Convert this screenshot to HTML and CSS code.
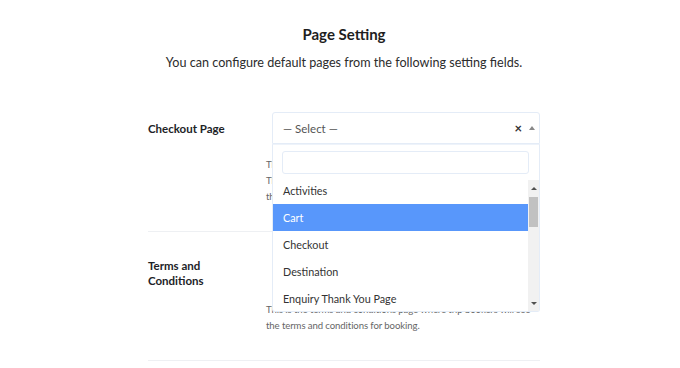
FILE: index.html
```html
<!DOCTYPE html>
<html lang="en">
<head>
<meta charset="utf-8">
<title>Page Setting</title>
<link rel="stylesheet" href="styles.css">
</head>
<body>
<div class="page">
  <h1 class="title">Page Setting</h1>
  <p class="subtitle">You can configure default pages from the following setting fields.</p>
  <div class="settings">
    <div class="row">
      <div class="label">Checkout Page</div>
      <div class="field">
        <div class="select open">
          <span class="placeholder">— Select —</span>
          <span class="controls"><span class="clear">×</span><span class="caret"></span></span>
          <div class="dropdown">
            <div class="search"><input type="text" class="search-input"></div>
            <div class="results">
              <ul class="options">
                <li>Activities</li>
                <li class="active">Cart</li>
                <li>Checkout</li>
                <li>Destination</li>
                <li>Enquiry Thank You Page</li>
                <li>Home</li>
                <li>My Account</li>
                <li>Privacy Policy</li>
                <li>Terms and Conditions</li>
                <li>Thank You</li>
                <li>Trip Search Results</li>
                <li>Trip Types</li>
                <li>Trips</li>
                <li>Wishlist</li>
              </ul>
              <div class="scrollbar">
                <span class="sb-btn up"></span>
                <span class="sb-track"><span class="sb-thumb"></span></span>
                <span class="sb-btn down"></span>
              </div>
            </div>
          </div>
        </div>
        <p class="desc">This is the checkout page where trip bookers will book their trips.<br>The checkout shortcode must be placed on this page to show<br>the checkout form.</p>
      </div>
    </div>
    <div class="row">
      <div class="label">Terms and<br>Conditions</div>
      <div class="field">
        <div class="select">
          <span class="placeholder">— Select —</span>
          <span class="controls"><span class="caret down"></span></span>
        </div>
        <p class="desc">This is the terms and conditions page where trip bookers will see the terms and conditions for booking.</p>
      </div>
    </div>
  </div>
</div>
</body>
</html>
```
FILE: styles.css
```css
* { box-sizing: border-box; }
html, body { margin: 0; padding: 0; background: #fff; }
body {
  font-family: Lato, "Open Sans", sans-serif;
  color: #1e1e1e;
}
.page {
  padding: 23px 0 0 8px;
}
.title {
  margin: 0;
  text-align: center;
  font-size: 15px;
  font-weight: 700;
  line-height: 22px;
  color: #1e1e1e;
}
.subtitle {
  margin: 7px 0 0;
  text-align: center;
  font-size: 12.6px;
  line-height: 22px;
  color: #2c2c2c;
}
.settings {
  width: 392px;
  margin: 13px auto 0;
}
.row {
  display: flex;
  padding: 25px 0 26px;
  border-bottom: 1px solid #eef0f3;
}
.label {
  width: 118px;
  flex: none;
  font-size: 11.5px;
  font-weight: 700;
  line-height: 15px;
  color: #1d2327;
  height: 32px;
  display: flex;
  align-items: center;
}
.field {
  flex: 1;
  min-width: 0;
}
.select {
  position: relative;
  margin-left: 6px;
  height: 32px;
  border: 1px solid #e4ecf7;
  border-radius: 3px;
  display: flex;
  align-items: center;
  padding: 0 4px 0 10px;
  font-size: 11.5px;
  color: #555;
  background: #fff;
}
.select.open {
  border-radius: 3px 3px 0 0;
  z-index: 2;
}
.placeholder { flex: 1; }
.controls {
  display: flex;
  align-items: center;
  gap: 7px;
}
.clear {
  font-size: 13px;
  font-weight: 700;
  color: #333;
  line-height: 1;
}
.caret {
  width: 0;
  height: 0;
  border-left: 3px solid transparent;
  border-right: 3px solid transparent;
  border-bottom: 4px solid #888;
}
.caret.down {
  border-bottom: 0;
  border-top: 4px solid #888;
}
.dropdown {
  position: absolute;
  left: -1px;
  right: -1px;
  top: 31px;
  background: #fff;
  border: 1px solid #e4ecf7;
  border-top: 1px solid #eef3fa;
  border-radius: 0 0 3px 3px;
}
.search {
  padding: 6px 10px 6px 9px;
}
.search-input {
  display: block;
  width: 100%;
  height: 23px;
  border: 1px solid #e4ecf7;
  border-radius: 3px;
  outline: none;
  font: inherit;
}
.results {
  display: flex;
  height: 131px;
  overflow: hidden;
}
.options {
  flex: 1;
  list-style: none;
  margin: -3px 0 0;
  padding: 0;
  overflow: hidden;
}
.options li {
  height: 27px;
  line-height: 27px;
  padding-left: 10px;
  font-size: 10.8px;
  color: #333;
}
.options li.active {
  background: #5897fb;
  color: #fff;
}
.scrollbar {
  width: 11px;
  flex: none;
  display: flex;
  flex-direction: column;
  background: #f1f1f1;
}
.sb-btn {
  height: 16px;
  flex: none;
  display: flex;
  align-items: center;
  justify-content: center;
}
.sb-btn::before {
  content: "";
  width: 0;
  height: 0;
  border-left: 3px solid transparent;
  border-right: 3px solid transparent;
}
.sb-btn.up::before { border-bottom: 3px solid #505050; }
.sb-btn.down::before { border-top: 3px solid #505050; }
.sb-track {
  flex: 1;
  padding: 1px 1px;
}
.sb-thumb {
  display: block;
  height: 30px;
  background: #c1c1c1;
}
.desc {
  margin: 13px 0 0;
  font-size: 9.6px;
  letter-spacing: -0.1px;
  line-height: 16px;
  color: #666;
}
```
